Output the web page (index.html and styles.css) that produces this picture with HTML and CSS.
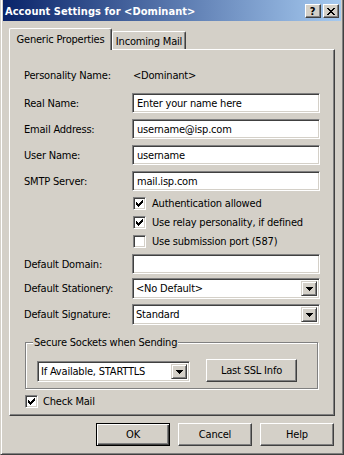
FILE: index.html
```html
<!DOCTYPE html>
<html lang="en">
<head>
  <meta charset="UTF-8" />
  <title>Account Settings</title>
  <link rel="stylesheet" href="styles.css">
</head>
<body>
  <div class="window">
    <!-- Caption -->
    <div class="titlebar">
      <span class="title">Account Settings for &lt;Dominant&gt;</span>
      <div class="caption-btns">
        <div class="cap-btn help">?</div>
        <div class="cap-btn">
          <svg width="8" height="7" viewBox="0 0 8 7" shape-rendering="crispEdges">
            <path d="M0 0h2v1h-2zM6 0h2v1h-2zM1 1h2v1h-2zM5 1h2v1h-2zM2 2h4v1h-4zM3 3h2v1h-2zM2 4h4v1h-4zM1 5h2v1h-2zM5 5h2v1h-2zM0 6h2v1h-2zM6 6h2v1h-2z" fill="#000"/>
          </svg>
        </div>
      </div>
    </div>

    <div class="client">
      <!-- Tabs -->
      <div class="tabs">
        <div class="tab active">Generic Properties</div>
        <div class="tab">Incoming Mail</div>
      </div>

      <div class="panel">
        <div class="row first">
          <div class="label">Personality Name:</div>
          <div class="value">&lt;Dominant&gt;</div>
        </div>

        <div class="row gap8">
          <div class="label">Real Name:</div>
          <div class="field">Enter your name here</div>
        </div>
        <div class="row">
          <div class="label">Email Address:</div>
          <div class="field">username@isp.com</div>
        </div>
        <div class="row">
          <div class="label">User Name:</div>
          <div class="field">username</div>
        </div>
        <div class="row">
          <div class="label">SMTP Server:</div>
          <div class="field">mail.isp.com</div>
        </div>

        <div class="check-row indent">
          <div class="checkbox checked"><svg width="7" height="7" viewBox="0 0 7 7" shape-rendering="crispEdges"><path d="M6 0h1v1h-1zM5 1h2v1h-2zM0 2h1v1h-1zM4 2h3v1h-3zM0 3h2v1h-2zM3 3h3v1h-3zM0 4h5v1h-5zM1 5h3v1h-3zM2 6h1v1h-1z"/></svg></div>
          <span>Authentication allowed</span>
        </div>
        <div class="check-row indent">
          <div class="checkbox checked"><svg width="7" height="7" viewBox="0 0 7 7" shape-rendering="crispEdges"><path d="M6 0h1v1h-1zM5 1h2v1h-2zM0 2h1v1h-1zM4 2h3v1h-3zM0 3h2v1h-2zM3 3h3v1h-3zM0 4h5v1h-5zM1 5h3v1h-3zM2 6h1v1h-1z"/></svg></div>
          <span>Use relay personality, if defined</span>
        </div>
        <div class="check-row indent">
          <div class="checkbox"></div>
          <span>Use submission port (587)</span>
        </div>

        <div class="row">
          <div class="label">Default Domain:</div>
          <div class="field"></div>
        </div>
        <div class="row combo-row first-combo">
          <div class="label">Default Stationery:</div>
          <div class="combo wide">
            <div class="combo-text">&lt;No Default&gt;</div>
            <div class="combo-btn"><svg width="7" height="4" viewBox="0 0 7 4" shape-rendering="crispEdges"><path d="M0 0h7v1h-7zM1 1h5v1h-5zM2 2h3v1h-3zM3 3h1v1h-1z"/></svg></div>
          </div>
        </div>
        <div class="row combo-row">
          <div class="label">Default Signature:</div>
          <div class="combo wide">
            <div class="combo-text">Standard</div>
            <div class="combo-btn"><svg width="7" height="4" viewBox="0 0 7 4" shape-rendering="crispEdges"><path d="M0 0h7v1h-7zM1 1h5v1h-5zM2 2h3v1h-3zM3 3h1v1h-1z"/></svg></div>
          </div>
        </div>

        <!-- Secure sockets group -->
        <div class="group">
          <div class="legend">Secure Sockets when Sending</div>
          <div class="group-row">
            <div class="combo narrow">
              <div class="combo-text">If Available, STARTTLS</div>
              <div class="combo-btn"><svg width="7" height="4" viewBox="0 0 7 4" shape-rendering="crispEdges"><path d="M0 0h7v1h-7zM1 1h5v1h-5zM2 2h3v1h-3zM3 3h1v1h-1z"/></svg></div>
            </div>
            <div class="button ssl">Last SSL Info</div>
          </div>
        </div>

        <div class="check-row check-mail">
          <div class="checkbox checked"><svg width="7" height="7" viewBox="0 0 7 7" shape-rendering="crispEdges"><path d="M6 0h1v1h-1zM5 1h2v1h-2zM0 2h1v1h-1zM4 2h3v1h-3zM0 3h2v1h-2zM3 3h3v1h-3zM0 4h5v1h-5zM1 5h3v1h-3zM2 6h1v1h-1z"/></svg></div>
          <span>Check Mail</span>
        </div>
      </div>

      <!-- Dialog buttons -->
      <div class="dialog-btns">
        <div class="button default">OK</div>
        <div class="button">Cancel</div>
        <div class="button">Help</div>
      </div>
    </div>
  </div>
</body>
</html>
```
FILE: styles.css
```css
/* Classic dialog look */
* {
  box-sizing: border-box;
}
html, body {
  margin: 0;
  padding: 0;
  background-color: #d4d0c8;
  color: #000;
  font-family: "DejaVu Sans Condensed", Tahoma, "DejaVu Sans", sans-serif;
  font-size: 11px;
  letter-spacing: -0.2px;
}

.window {
  width: 344px;
  height: 455px;
  border: 1px solid;
  border-top: none;
  border-color: #d4d0c8 #404040 #404040 #d4d0c8;
  padding: 0 2px 2px 2px;
  box-shadow: inset 1px 0 #fff, inset -1px -1px #808080;
}

/* Title bar */
.titlebar {
  height: 21px;
  display: flex;
  align-items: center;
  padding: 1px 2px 0 2px;
  background: linear-gradient(to right, #0a246a, #a6caf0);
}
.title {
  flex: 1;
  color: #fff;
  font-weight: bold;
  font-size: 11px;
  letter-spacing: 0.05px;
  white-space: nowrap;
}
.caption-btns {
  display: flex;
  gap: 2px;
}
.cap-btn {
  width: 16px;
  height: 14px;
  background: #d4d0c8;
  border: 1px solid;
  border-color: #fff #404040 #404040 #fff;
  box-shadow: inset -1px -1px #808080;
  display: flex;
  align-items: center;
  justify-content: center;
}
.cap-btn.help {
  font-weight: bold;
  font-size: 11px;
  line-height: 1;
  padding-right: 1px;
}

/* Client area */
.client {
  padding: 7px 6px 0 6px;
}
.tabs {
  display: flex;
  align-items: flex-end;
  height: 21px;
}
.tab {
  height: 18px;
  width: 74px;
  border: 1px solid;
  border-bottom: none;
  border-color: #fff #404040 #404040 #fff;
  border-radius: 2px 2px 0 0;
  box-shadow: inset -1px 0 #808080;
  background: #d4d0c8;
  display: flex;
  align-items: center;
  justify-content: center;
  padding-top: 2px;
  white-space: nowrap;
}
.tab.active {
  width: 103px;
  height: 22px;
  margin-bottom: -1px;
  position: relative;
  z-index: 1;
  padding-top: 0;
}

.panel {
  height: 367px;
  border: 1px solid;
  border-color: #fff #404040 #404040 #fff;
  box-shadow: inset -1px -1px #808080;
  padding: 15px 14px 0 14px;
}

/* Form rows */
.row {
  display: flex;
  align-items: center;
  height: 20px;
  margin-top: 6px;
}
.row.first {
  margin-top: 0;
}
.row.gap8 {
  margin-top: 8px;
}
.label {
  width: 108px;
  flex: none;
}
.value {
  padding-left: 1px;
}
.field {
  width: 189px;
  height: 20px;
  background: #fff;
  border: 1px solid;
  border-color: #808080 #fff #fff #808080;
  box-shadow: inset 1px 1px #404040, inset -1px -1px #d4d0c8;
  padding-left: 4px;
  display: flex;
  align-items: center;
  white-space: nowrap;
}

.check-row {
  display: flex;
  align-items: center;
  height: 13px;
  margin-top: 6px;
  gap: 6px;
}
.check-row.indent {
  padding-left: 109px;
}
.checkbox {
  width: 13px;
  height: 13px;
  flex: none;
  background: #fff;
  border: 1px solid;
  border-color: #808080 #fff #fff #808080;
  box-shadow: inset 1px 1px #404040, inset -1px -1px #d4d0c8;
  display: flex;
  align-items: center;
  justify-content: center;
}
.checkbox svg {
  fill: #000;
}

/* Combo boxes */
.combo-row {
  height: 21px;
  margin-top: 5px;
}
.combo-row.first-combo {
  margin-top: 4px;
}
.combo {
  display: flex;
  background: #fff;
  border: 1px solid;
  border-color: #808080 #fff #fff #808080;
  box-shadow: inset 1px 1px #404040, inset -1px -1px #d4d0c8;
  padding: 2px 2px 2px 2px;
}
.combo.wide {
  width: 189px;
  height: 21px;
}
.combo.narrow {
  width: 153px;
  height: 21px;
}
.combo-text {
  flex: 1;
  display: flex;
  align-items: center;
  padding-left: 1px;
  white-space: nowrap;
}
.combo-btn {
  width: 16px;
  flex: none;
  background: #d4d0c8;
  border: 1px solid;
  border-color: #d4d0c8 #404040 #404040 #d4d0c8;
  box-shadow: inset 1px 1px #fff, inset -1px -1px #808080;
  display: flex;
  align-items: center;
  justify-content: center;
}

/* Group box */
.group {
  margin: 17px 0 0 1px;
  width: 293px;
  height: 47px;
  border: 1px solid #808080;
  box-shadow: inset 1px 1px #fff, 1px 1px 0 #fff;
  padding: 0 10px 0 11px;
}
.legend {
  display: inline-block;
  margin: -7px 0 0 -4px;
  padding: 0 1px;
  height: 13px;
  line-height: 13px;
  background: #d4d0c8;
  vertical-align: top;
}
.group-row {
  display: flex;
  align-items: flex-end;
  gap: 16px;
  margin-top: 3px;
}

.check-mail {
  margin: 6px 0 0 1px;
  gap: 5px;
}

/* Push buttons */
.button {
  width: 74px;
  height: 23px;
  background: #d4d0c8;
  border: 1px solid;
  border-color: #fff #404040 #404040 #fff;
  box-shadow: inset -1px -1px #808080;
  display: flex;
  align-items: center;
  justify-content: center;
  white-space: nowrap;
}
.button.ssl {
  width: 91px;
}
.button.default {
  border-color: #000;
  box-shadow: inset 1px 1px #fff, inset -1px -1px #404040, inset -2px -2px #808080;
}
.dialog-btns {
  display: flex;
  justify-content: flex-end;
  gap: 8px;
  margin-top: 7px;
  padding-right: 1px;
}
```
